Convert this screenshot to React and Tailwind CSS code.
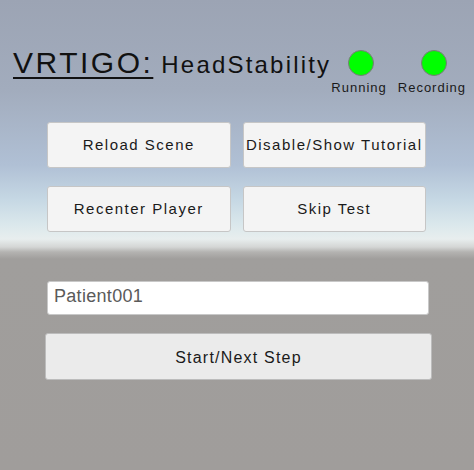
const StatusLight = ({ label }) => (
  <div className="flex flex-col items-center">
    <div className="ml-[4px] mt-[2px] h-[26px] w-[26px] rounded-full border border-[#7a7a7a] bg-[#00ff00]" />
    <span className="mt-[5px] text-[13px] leading-none tracking-[1px] text-[#1a1a1a]">{label}</span>
  </div>
);

const MenuButton = ({ children }) => (
  <button className="flex h-[46px] items-center justify-center rounded-[3px] border border-[#c6c6c6] bg-[#f4f4f4] pt-[1px] text-[15px] tracking-[1.5px] text-[#1a1a1a] whitespace-nowrap">
    {children}
  </button>
);

export default function App() {
  return (
    <div
      className="h-[470px] w-full overflow-hidden bg-[linear-gradient(to_bottom,#9ca4b4_0px,#a2acbd_90px,#b0c0d5_165px,#c6d8e4_200px,#dbe8ec_225px,#e8eeee_239px,#d4d6d5_247px,#b4b3b1_252px,#a09e9c_259px,#a09d9b_470px)] font-['Liberation_Sans',Arial,sans-serif]"
    >
      {/* title bar with status lights */}
      <header className="flex items-start pl-[13px] pt-[48px]">
        <div className="flex shrink-0 items-baseline">
          <h1 className="text-[30px] leading-none tracking-[2.5px] text-[#111] underline decoration-2 underline-offset-[4px]">
            VRTIGO:
          </h1>
          <span className="ml-[8px] text-[24px] leading-none tracking-[2.2px] text-[#111]">HeadStability</span>
        </div>
        <div className="flex shrink-0 gap-[11px]">
          <StatusLight label="Running" />
          <StatusLight label="Recording" />
        </div>
      </header>

      <div className="ml-[47px] mt-[28px] grid w-[379px] grid-cols-2 gap-x-[12px] gap-y-[18px]">
        <MenuButton>Reload Scene</MenuButton>
        <MenuButton>Disable/Show Tutorial</MenuButton>
        <MenuButton>Recenter Player</MenuButton>
        <MenuButton>Skip Test</MenuButton>
      </div>

      <input
        readOnly
        value="Patient001"
        className="ml-[47px] mt-[49px] block h-[34px] w-[382px] rounded-[3px] border border-[#c8c8c8] bg-white pb-[4px] pl-[6px] text-[18px] tracking-[0.3px] text-[#5a5a5a] outline-none"
      />

      <button className="ml-[45px] mt-[18px] flex h-[47px] w-[387px] items-center justify-center rounded-[3px] border border-[#bcbcbc] bg-[#ebebeb] pt-[2px] text-[16px] tracking-[1.2px] text-[#1a1a1a]">
        Start/Next Step
      </button>
    </div>
  );
}
